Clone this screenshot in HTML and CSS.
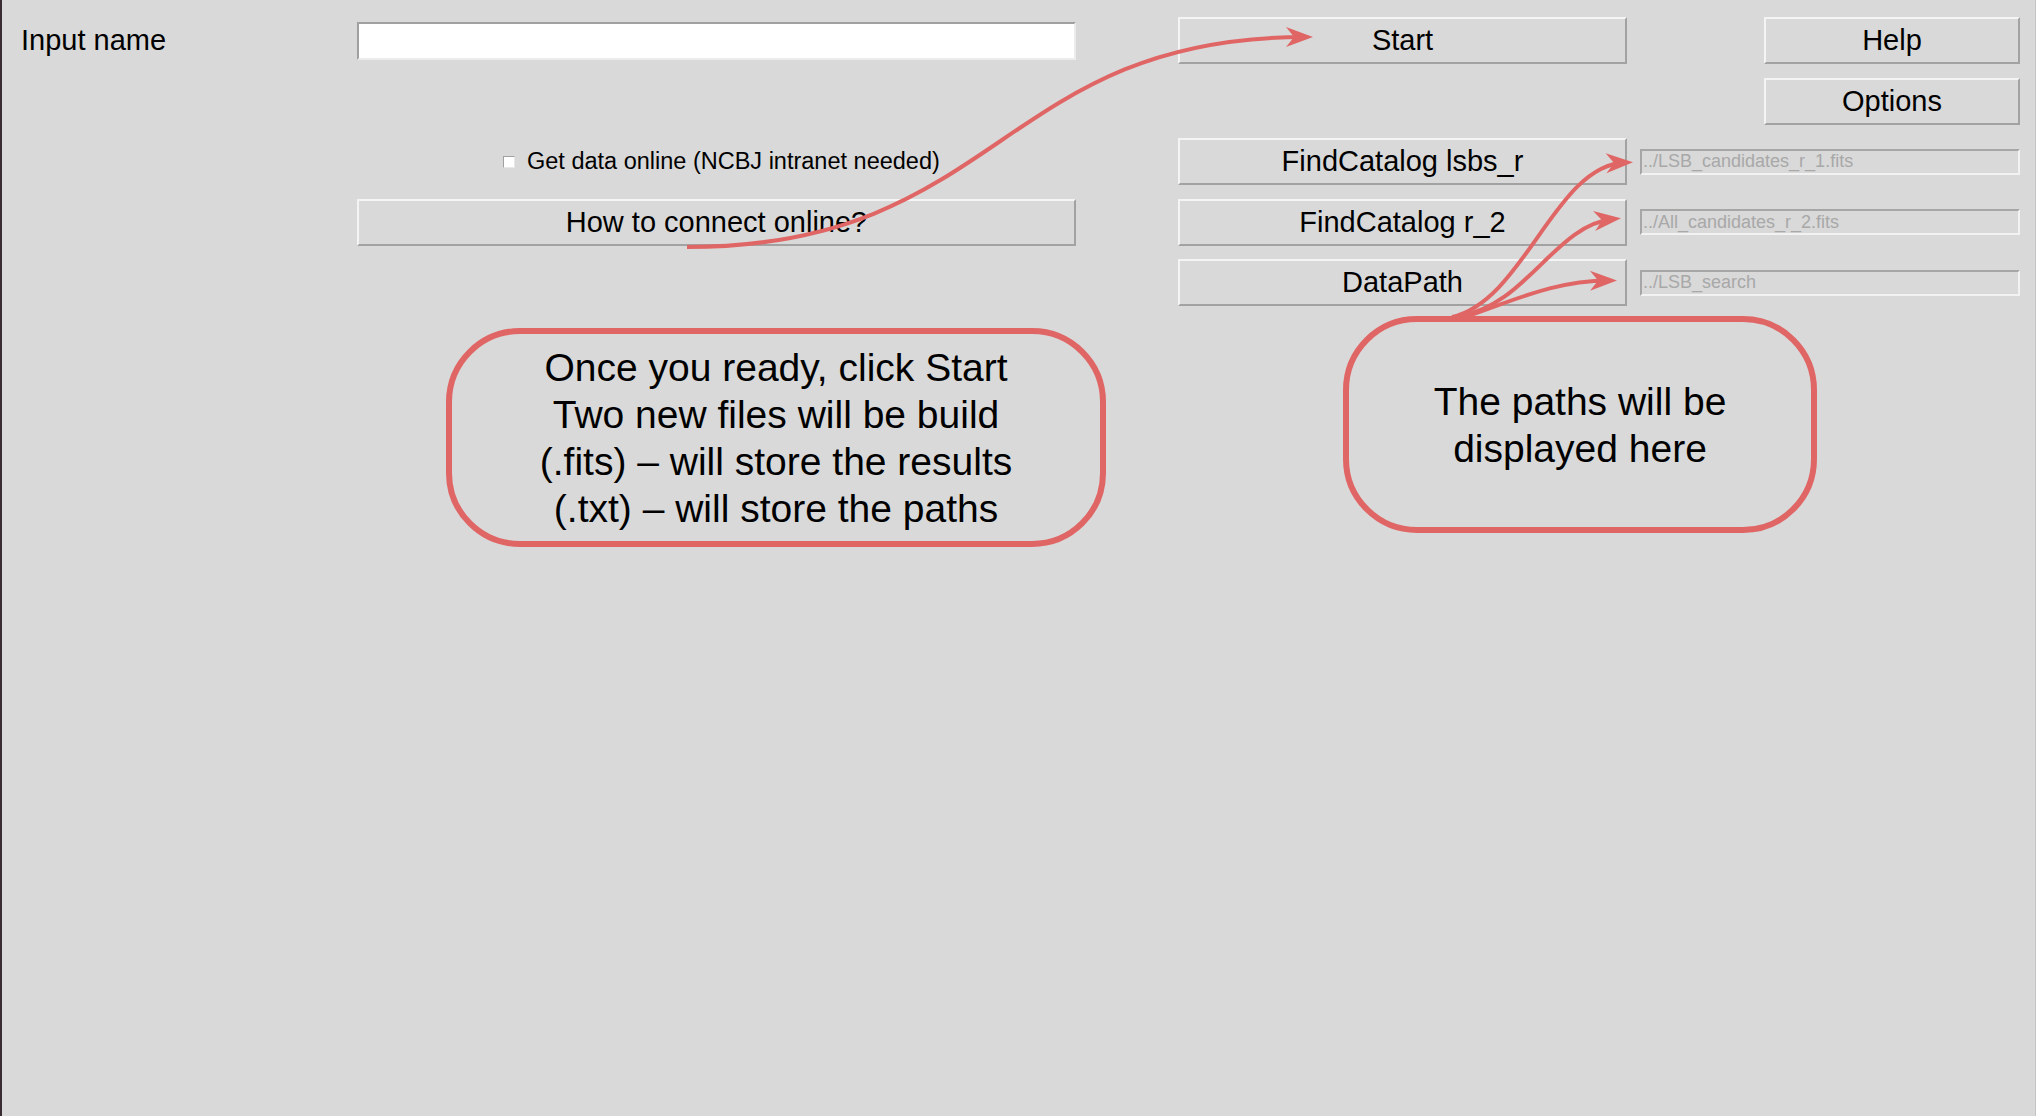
FILE: index.html
```html
<!DOCTYPE html>
<html lang="en">
<head>
<meta charset="utf-8">
<title>LSB search</title>
<link rel="stylesheet" href="styles.css">
</head>
<body>
<div class="app">
  <div class="form">
    <label class="lbl r1 c1" for="name">Input name</label>
    <input id="name" class="entry r1 c2" type="text">
    <button class="btn r1 c3">Start</button>
    <button class="btn side r1 c4">Help</button>
    <button class="btn side r2 c4">Options</button>

    <label class="check r3 c2"><input type="checkbox" class="box"><span>Get data online (NCBJ intranet needed)</span></label>
    <button class="btn r3 c3">FindCatalog lsbs_r</button>
    <input class="path r3 c4" type="text" readonly value="../LSB_candidates_r_1.fits">

    <button class="btn r4 c2">How to connect online?</button>
    <button class="btn r4 c3">FindCatalog r_2</button>
    <input class="path r4 c4" type="text" readonly value="../All_candidates_r_2.fits">

    <button class="btn r5 c3">DataPath</button>
    <input class="path r5 c4" type="text" readonly value="../LSB_search">
  </div>

  <svg class="annot" width="2036" height="1116" viewBox="0 0 2036 1116">
    <defs>
      <marker id="ah" markerUnits="userSpaceOnUse" orient="auto" viewBox="-22 -12 32 24" markerWidth="32" markerHeight="24" refX="0" refY="0">
        <path d="M8,0 L-19,-10 L-11,0 L-19,10 Z" fill="#e06666"/>
      </marker>
    </defs>
    <path class="arrow" d="M687,247 C1000,247 1000,37 1305,37" marker-end="url(#ah)"/>
    <path class="arrow" d="M1452,317 C1525,300 1555,165 1625,162.5" marker-end="url(#ah)"/>
    <path class="arrow" d="M1460,316 C1528,304 1555,225 1613,219" marker-end="url(#ah)"/>
    <path class="arrow" d="M1468,316 C1520,298 1555,281 1609,280.5" marker-end="url(#ah)"/>
  </svg>

  <div class="callout callout-start">Once you ready, click Start<br>Two new files will be build<br>(.fits) – will store the results<br>(.txt) – will store the paths</div>
  <div class="callout callout-paths">The paths will be<br>displayed here</div>
</div>
</body>
</html>
```

FILE: styles.css
```css
html, body {
  margin: 0;
  padding: 0;
}

body {
  width: 2036px;
  height: 1116px;
  overflow: hidden;
  background: #d9d9d9;
  font-family: "Liberation Sans", Arial, sans-serif;
  color: #000;
}

.app {
  position: relative;
  width: 2036px;
  height: 1116px;
  box-sizing: border-box;
  border-left: 2px solid #3a2c33;
  border-right: 1px solid #c4c4c4;
}

.form {
  display: grid;
  grid-template-columns: 336px 821px 462px 380px;
  grid-template-rows: repeat(5, 47px);
  row-gap: 13.5px;
  padding: 17px 0 0 19px;
}

.r1 { grid-row: 1; }
.r2 { grid-row: 2; }
.r3 { grid-row: 3; }
.r4 { grid-row: 4; }
.r5 { grid-row: 5; }
.c1 { grid-column: 1; }
.c2 { grid-column: 2; }
.c3 { grid-column: 3; }
.c4 { grid-column: 4; }

.lbl {
  align-self: center;
  font-size: 29px;
}

.btn {
  font-family: inherit;
  font-size: 29px;
  color: #000;
  background: #d9d9d9;
  border: 2px solid;
  border-color: #f4f4f4 #a2a2a2 #a2a2a2 #f4f4f4;
  padding: 0;
  margin: 0;
  width: 100%;
  box-sizing: border-box;
}

.c2.btn { width: 719px; }
.c3.btn { width: 449px; }
.side { width: 256px; justify-self: end; }

.entry {
  align-self: center;
  width: 719px;
  height: 38px;
  box-sizing: border-box;
  margin: 0;
  background: #fff;
  border: 2px solid;
  border-color: #a0a0a0 #ececec #ececec #a0a0a0;
  font-family: inherit;
  font-size: 20px;
}

.path {
  align-self: center;
  width: 380px;
  height: 26px;
  box-sizing: border-box;
  margin: 0;
  padding: 0 0 0 1px;
  background: #d9d9d9;
  border: 2px solid;
  border-color: #a6a6a6 #f2f2f2 #f2f2f2 #a6a6a6;
  font-family: inherit;
  font-size: 18px;
  color: #a8a8a8;
  outline: none;
}

.check {
  align-self: center;
  justify-self: start;
  margin-left: 146px;
  display: flex;
  align-items: center;
  gap: 12px;
  font-size: 23.5px;
}

.box {
  -webkit-appearance: none;
  appearance: none;
  margin: 0;
  width: 12px;
  height: 12px;
  box-sizing: border-box;
  background: #fff;
  border: 1px solid;
  border-color: #a0a0a0 #e8e8e8 #e8e8e8 #a0a0a0;
}

.annot {
  position: absolute;
  left: -2px;
  top: 0;
  pointer-events: none;
  z-index: 2;
}

.arrow {
  fill: none;
  stroke: #e06666;
  stroke-width: 4;
}

.callout {
  position: absolute;
  box-sizing: border-box;
  border: 6px solid #e06666;
  border-radius: 74px;
  display: flex;
  align-items: center;
  justify-content: center;
  text-align: center;
  font-size: 39px;
  line-height: 47px;
  color: #000;
}

.callout-start {
  left: 444px;
  top: 328px;
  width: 660px;
  height: 219px;
}

.callout-paths {
  left: 1341px;
  top: 316px;
  width: 474px;
  height: 217px;
}
```
